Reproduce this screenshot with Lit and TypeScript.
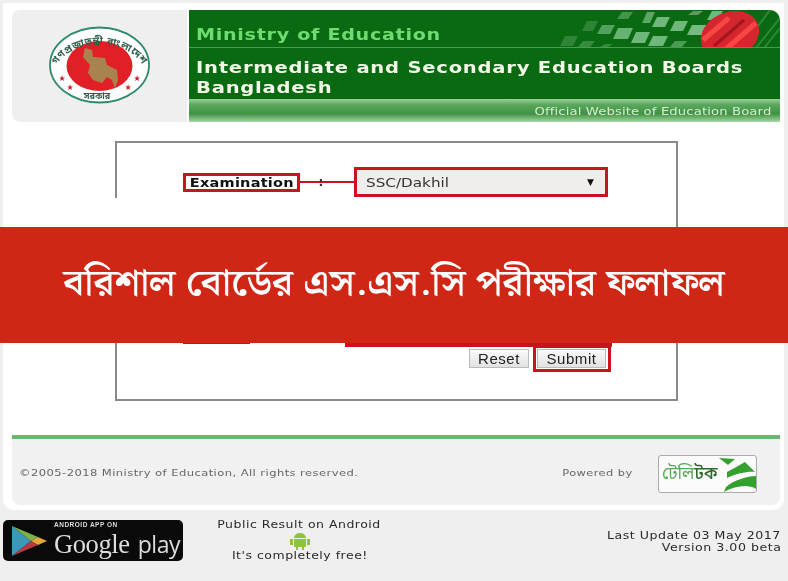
import { LitElement, html, css, svg, unsafeCSS } from "lit";
import { customElement } from "lit/decorators.js";

const BN = `"Noto Sans Bengali","Lohit Bengali","Noto Serif Bengali","FreeSerif","Noto Sans",sans-serif`;
const BNC = unsafeCSS(BN);

const tiles: number[][] = [
  [617, 633, 12, 19, .4], [642, 655, 12, 23, .55], [652, 670, 17, 27, .7], [670, 688, 21, 31, .7], [688, 703, 11, 15, .5],
  [707, 723, 11, 20, .7], [687, 707, 25, 35, .75], [582, 598, 21, 31, .25], [597, 615, 25, 34, .5], [613, 633, 28, 39, .65],
  [631, 650, 32, 43, .7], [648, 668, 36, 46, .7], [670, 687, 41, 47, .45], [560, 578, 36, 46, .25], [578, 595, 41, 47, .3], [600, 613, 44, 47, .3],
];
const pattern = tiles.map(([a, b, t, u, o]) => svg`<polygon points="${a + 5},${t} ${b},${t} ${b - 5},${u} ${a},${u}" fill="#9ad8a6" opacity=${o}/>`);

@customElement("app-root")
export class AppRoot extends LitElement {
  static styles = css`
    :host { display: block; width: 788px; height: 581px; overflow: hidden; position: relative; background: #efefef; font-family: "DejaVu Sans", sans-serif; }
    .card { background: #fff; margin: 3px 4px 0 3px; padding: 7px 4px 6px 9px; height: 494px; border-radius: 0 0 10px 10px; filter: blur(.35px); }
    .sx { display: inline-block; white-space: nowrap; transform-origin: 0 50%; }
    .s125 { transform: scaleX(1.185); }
    .s124 { transform: scaleX(1.16); }
    .s12 { transform: scaleX(1.2); transform-origin: 100% 50%; }
    .s121 { transform: scaleX(1.215); }
    .s12l { transform: scaleX(1.2); transform-origin: 100% 50%; }
    .s114c { transform: scaleX(1.135); transform-origin: 50% 50%; }
    .s115 { transform: scaleX(1.145); transform-origin: 100% 50%; }
    .s125c { transform: scaleX(1.16); transform-origin: 50% 50%; }
    .head { display: flex; gap: 2px; height: 112px; }
    .logo { width: 175px; background: #efefef; border-radius: 8px 0 0 8px; display: flex; }
    .logo svg { display: block; }
    .green { flex: 1; position: relative; overflow: hidden; display: flex; flex-direction: column; background: #0a6a12; border-radius: 0 10px 0 0; }
    .deco { position: absolute; left: 0; top: 0; }
    .ministry { flex: none; height: 38px; box-sizing: border-box; padding: 15px 0 0 7px; color: #6fdc6f; font-weight: 700; font-size: 16.5px; line-height: 20px; letter-spacing: .6px; border-bottom: 1px solid #4a9a4f; position: relative; }
    .title { flex: none; height: 51px; box-sizing: border-box; padding: 10px 0 0 7px; color: #f2f7e8; font-weight: 700; font-size: 16.5px; line-height: 19.5px; letter-spacing: .65px; position: relative; }
    .strip { flex: 0 0 23px; overflow: hidden; background: linear-gradient(#9ccf9c 0, #5aa75c 25%, #3f9343 65%, #a8d6a8 100%); color: #d7edd2; font-size: 11px; text-align: right; line-height: 26px; padding-right: 9px; position: relative; letter-spacing: .1px; }
    .form { box-sizing: border-box; margin: 19px 0 0 103px; width: 563px; height: 260px; border: 2px solid #8a8a8a; padding: 24px 0 0 66px; }
    .row1 { display: flex; align-items: center; height: 30px; }
    .lab { box-sizing: border-box; width: 117px; height: 19px; border: 3px solid #c8141c; font-weight: 700; font-size: 12.5px; line-height: 13px; text-align: center; color: #111; letter-spacing: .2px; }
    .conn { width: 54px; height: 19px; line-height: 19px; text-align: center; font-weight: 700; font-size: 12px; color: #333; padding-right: 12px; box-sizing: border-box; background: linear-gradient(#c8141c, #c8141c) 0 8px / 100% 2px no-repeat; }
    .sel { box-sizing: border-box; width: 254px; height: 30px; border: 3px solid #c8141c; background: #f0eded; display: flex; justify-content: space-between; align-items: center; padding: 0 11px 0 9px; color: #333; font-size: 13px; }
    .sel .sx { transform: scaleX(1.17); }
    .arrow { font-size: 9px; color: #111; }
    .row2 { display: flex; height: 27px; margin-top: 123px; gap: 95px; align-items: flex-start; }
    .lab2 { width: 67px; height: 24px; background: #c8141c; }
    .sel2 { width: 267px; height: 27px; background: #c8141c; }
    .btns { display: flex; align-items: center; margin: -2px 0 0 286px; gap: 4px; }
    button { font-family: "Liberation Sans", sans-serif; font-size: 15px; color: #222; height: 19px; padding: 0; line-height: 15px; border: 1px solid #bbb; background: linear-gradient(#fafafa, #e2e2e2); letter-spacing: .55px; }
    .reset { width: 60px; }
    .sub { box-sizing: border-box; width: 78px; height: 27px; border: 3px solid #c8141c; display: flex; align-items: center; padding-left: 1px; }
    .sub button { width: 69px; }
    .rule { height: 4px; background: #6db56d; margin-top: 34px; }
    .foot { height: 66px; background: #f1f1f1; border-radius: 0 0 8px 8px; display: flex; align-items: center; color: #666; font-size: 9.5px; box-sizing: border-box; padding: 0 23px 0 7px; letter-spacing: .35px; }
    .copy { flex: 1; }
    .pow { margin-right: 25px; }
    .tele { width: 99px; height: 38px; box-sizing: border-box; margin-top: 4px; border: 1px solid #aaa; border-radius: 3px; background: #fbfbfb; display: flex; align-items: center; padding-left: 3px; color: #5aa85a; font: 400 17px ${BNC}; letter-spacing: 0; overflow: hidden; white-space: nowrap; }
    .tele b { font-weight: 500; color: #2a6a2a; }
    .tele svg { flex: none; margin-left: auto; }
    .bottom { display: flex; padding: 10px 7px 0 3px; color: #2a2a2a; font-size: 11px; letter-spacing: .45px; filter: blur(.35px); }
    .gp { width: 180px; height: 41px; background: #0a0a0a; border-radius: 5px; flex: none; color: #ddd; position: relative; display: flex; }
    .gp svg { flex: none; margin: 5px 0 0 8px; }
    .gpt { margin-left: 7px; padding-top: 1px; }
    .gps { font: 700 6.5px/8px "Liberation Sans", sans-serif; letter-spacing: .5px; }
    .gpn { font: 26.5px/30px "Liberation Serif", serif; letter-spacing: -.4px; white-space: nowrap; }
    .gpn span { font: 400 23px/30px "Open Sans", sans-serif; margin-left: 8px; letter-spacing: -.4px; }
    .pub { width: 163px; margin: -2px 0 0 35px; text-align: center; line-height: 14px; }
    .pub svg { display: block; margin: 0 auto -1px; }
    .pub p { margin: 0; }
    .upd { margin: 10px 0 0 auto; text-align: right; line-height: 12px; }
    .banner { position: absolute; left: 0; right: 0; top: 227px; height: 116px; background: #cf2616; color: #fff; display: flex; justify-content: center; font: 600 37px/116px "Noto Serif Bengali", ${BNC}; white-space: nowrap; }
    .banner span { transform: scaleX(1.067); }
    .patch { position: absolute; left: 113px; top: 198px; width: 512px; height: 29px; background: #fff; }
  `;

  render() {
    return html`
      <div class="card">
        <div class="head">
          <div class="logo">
            <svg width="175" height="112" viewBox="12 10 175 112">
              <ellipse cx="99.5" cy="65" rx="49.5" ry="37.5" fill="#fff" stroke="#2f8a6a" stroke-width="1.8"/>
              <ellipse cx="99.5" cy="66" rx="33" ry="25" fill="#e01f26"/>
              <path d="M85 48l7 2 1 7 12 1 2 7 10 5 1 10-3 8-3-8-5-3-5 6-9-3-5-7 2-8-7-8z" fill="#a8834f"/>
              <path id="a1" d="M53 74a47 35 0 0 1 93 0" fill="none"/>
              <text font-size="10" letter-spacing=".6" fill="#2d5f4a" font-family=${BN} font-weight="700"><textPath href="#a1" startOffset="50%" text-anchor="middle">গণপ্রজাতন্ত্রী বাংলাদেশ</textPath></text>
              <text font-size="9" fill="#2d5f4a" font-family=${BN} font-weight="700" text-anchor="middle" x="97" y="99">সরকার</text>
              <g fill="#c8202a" font-size="8" text-anchor="middle"><text x="62" y="81">★</text><text x="70" y="90">★</text><text x="137" y="81">★</text><text x="128" y="90">★</text></g>
            </svg>
          </div>
          <div class="green">
            <svg class="deco" width="591" height="48" viewBox="189 10 591 48">
              <g>${pattern}</g>
              <path d="M742 48L770 10M756 48L780 18M764 48L780 28" stroke="#5fae63" stroke-width="2" opacity=".45"/>
              <clipPath id="fc"><rect x="189" y="10" width="591" height="38"/></clipPath>
              <g clip-path="url(#fc)"><ellipse cx="730" cy="35" rx="30" ry="23" fill="#d4262e" transform="rotate(-22 730 35)"/>
              <path d="M703 40l26-22" stroke="#ff5048" stroke-width="5" opacity=".8"/>
              <path d="M714 46l30-26" stroke="#8a1218" stroke-width="3" opacity=".7"/>
              <path d="M726 49l30-26" stroke="#ff5048" stroke-width="5" opacity=".8"/></g>
            </svg>
            <div class="ministry"><span class="sx s124">Ministry of Education</span></div>
            <div class="title"><span class="sx s125">Intermediate and Secondary Education Boards</span><br><span class="sx s125">Bangladesh</span></div>
            <div class="strip"><span class="sx s12">Official Website of Education Board</span></div>
          </div>
        </div>
        <div class="form">
          <div class="row1">
            <div class="lab"><span class="sx s125c">Examination</span></div>
            <div class="conn">:</div>
            <div class="sel"><span class="sx">SSC/Dakhil</span><span class="arrow">▼</span></div>
          </div>
          <div class="row2"><div class="lab2"></div><div class="sel2"></div></div>
          <div class="btns">
            <button class="reset">Reset</button>
            <div class="sub"><button>Submit</button></div>
          </div>
        </div>
        <div class="rule"></div>
        <div class="foot">
          <span class="copy"><span class="sx s121">©2005-2018 Ministry of Education, All rights reserved.</span></span>
          <span class="pow"><span class="sx s12l">Powered by</span></span>
          <div class="tele"><span>টেলি<b>টক</b></span>
            <svg width="40" height="36" viewBox="716 454 40 36"><path d="M717 456L733 457 726 463zM725 470C732 466 738 463 743 460L753 470C747 469 735 471 725 476zM724 485C732 478 745 474 754 474L756 488C748 482 735 483 722 490z" fill="#35a02f"/></svg>
          </div>
        </div>
      </div>
      <div class="bottom">
        <div class="gp">
          <svg width="36" height="32" viewBox="0 0 36 32">
            <path d="M1 1V31L20 16z" fill="#3a98b8"/><path d="M1 1L20 16 27 12z" fill="#7fb04a"/>
            <path d="M27 12L20 16 27 20 36 16z" fill="#e2a93a"/><path d="M1 31L20 16 27 20z" fill="#b83a45"/>
          </svg>
          <div class="gpt"><div class="gps">ANDROID APP ON</div><div class="gpn">Google<span>play</span></div></div>
        </div>
        <div class="pub">
          <p><span class="sx s114c">Public Result on Android</span></p>
          <svg width="24" height="18" viewBox="0 0 24 18"><path d="M6 6a6 5 0 0 1 12 0zM6 7h12v7a1 1 0 0 1-1 1h-1v3h-2v-3h-4v3H8v-3H7a1 1 0 0 1-1-1zM2 7h3v6H2zM19 7h3v6h-3z" fill="#8fc23f"/></svg>
          <p><span class="sx s114c">It's completely free!</span></p>
        </div>
        <div class="upd"><span class="sx s115">Last Update 03 May 2017</span><br><span class="sx s115">Version 3.00 beta</span></div>
      </div>
      <div class="patch"></div>
      <div class="banner"><span>বরিশাল বোর্ডের এস.এস.সি পরীক্ষার ফলাফল</span></div>
    `;
  }
}
